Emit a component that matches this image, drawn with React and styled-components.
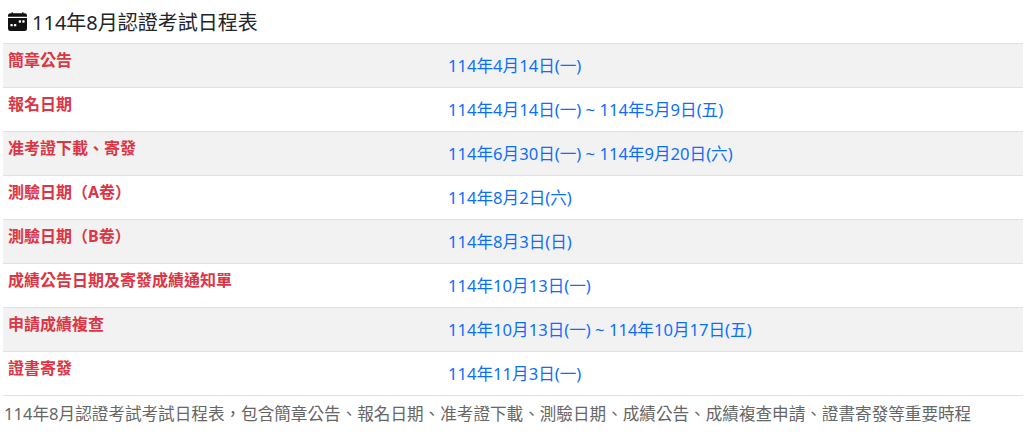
import styled, { createGlobalStyle } from "styled-components";
import { BsCalendarWeekFill } from "react-icons/bs";

const GlobalStyle = createGlobalStyle`
  body {
    margin: 0;
    background: #fff;
    font-family: "Noto Sans", "Noto Sans CJK TC", sans-serif;
    color: #212529;
  }
`;

const Page = styled.div`
  padding: 0 1px 0 3px;
`;

const Title = styled.h2`
  display: flex;
  align-items: center;
  gap: 5px;
  height: 43px;
  margin: 0;
  padding-left: 5px;
  font-size: 20px;
  font-weight: 400;
  color: #212529;
  svg {
    width: 19px;
    height: 19px;
    color: #111;
  }
`;

const Table = styled.table`
  width: 100%;
  border-collapse: collapse;
  table-layout: fixed;
  border-top: 1px solid #dee2e6;
`;

const Row = styled.tr`
  height: 44px;
  background: ${(props) => (props.striped ? "#f2f2f2" : "#fff")};
  border-bottom: 1px solid #dee2e6;
`;

const Label = styled.th`
  box-sizing: border-box;
  width: 437px;
  padding: 4px 5px 0;
  vertical-align: top;
  text-align: left;
  font-size: 16px;
  line-height: 24px;
  font-weight: 700;
  color: #dc3545;
`;

const Value = styled.td`
  padding: 1px 8px 0;
  vertical-align: middle;
  font-size: 16.6px;
  line-height: 24px;
  color: #0d6efd;
`;

const Note = styled.p`
  margin: 6px 0 0 1px;
  font-size: 16.6px;
  line-height: 24px;
  color: #666;
`;

const schedule = [
  ["簡章公告", "114年4月14日(一)"],
  ["報名日期", "114年4月14日(一) ~ 114年5月9日(五)"],
  ["准考證下載、寄發", "114年6月30日(一) ~ 114年9月20日(六)"],
  ["測驗日期（A卷）", "114年8月2日(六)"],
  ["測驗日期（B卷）", "114年8月3日(日)"],
  ["成績公告日期及寄發成績通知單", "114年10月13日(一)"],
  ["申請成績複查", "114年10月13日(一) ~ 114年10月17日(五)"],
  ["證書寄發", "114年11月3日(一)"],
];

export default function App() {
  return (
    <Page>
      <GlobalStyle />
      <Title>
        <BsCalendarWeekFill />
        114年8月認證考試日程表
      </Title>
      <Table>
        <tbody>
          {schedule.map(([label, date], i) => (
            <Row key={label} striped={i % 2 === 0}>
              <Label>{label}</Label>
              <Value>{date}</Value>
            </Row>
          ))}
        </tbody>
      </Table>
      <Note>
        114年8月認證考試考試日程表，包含簡章公告、報名日期、准考證下載、測驗日期、成績公告、成績複查申請、證書寄發等重要時程
      </Note>
    </Page>
  );
}
